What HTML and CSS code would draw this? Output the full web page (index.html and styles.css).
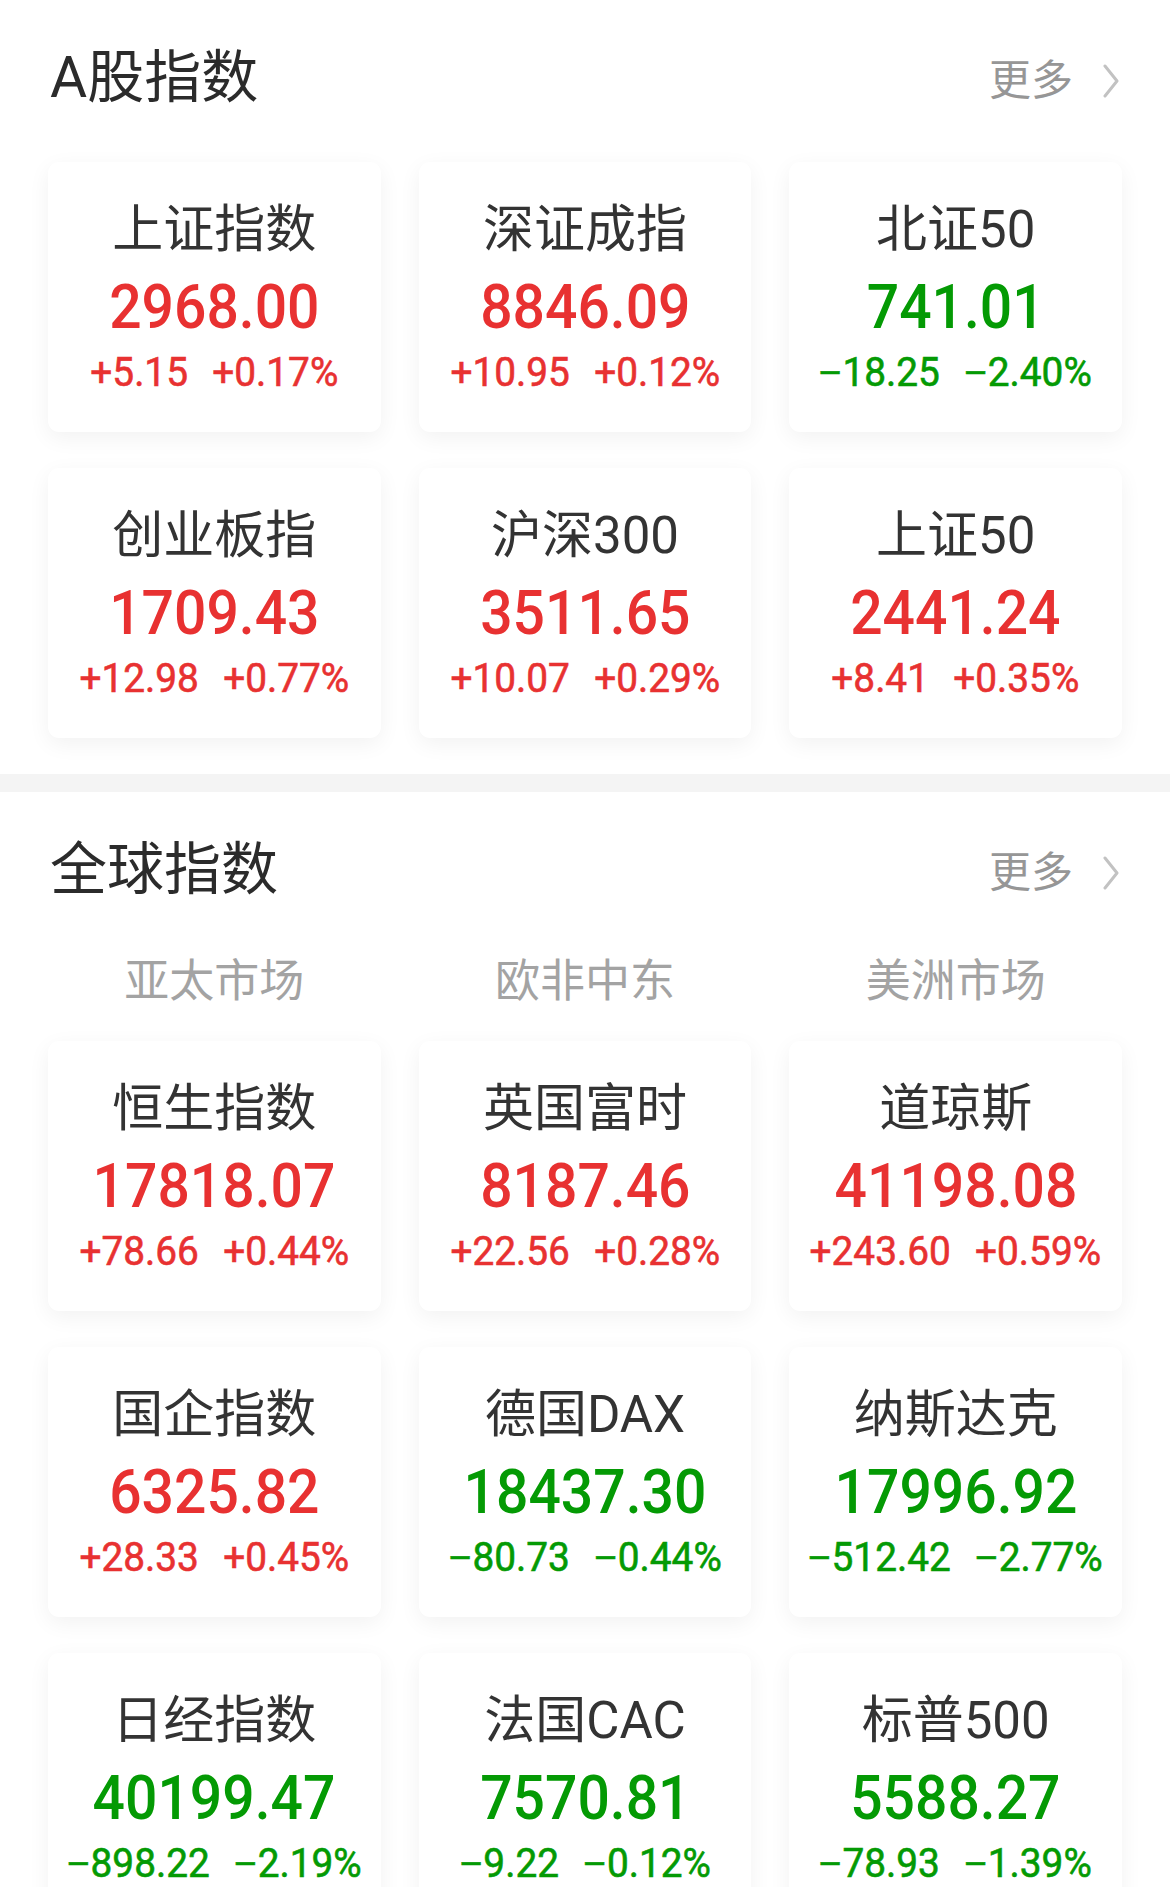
FILE: index.html
```html
<!DOCTYPE html>
<html lang="zh-CN">
<head>
<meta charset="utf-8">
<title>指数</title>
<link rel="stylesheet" href="styles.css">
</head>
<body>
<section class="block">
  <header class="block-head">
    <h2 class="block-title">A股指数</h2>
    <a class="more">更多<svg class="chev" viewBox="0 0 16 34" width="16" height="34"><polyline points="2,2 14,17 2,32" /></svg></a>
  </header>
  <div class="grid">
    <div class="card up"><div class="name">上证指数</div><div class="price"><span>2968.00</span></div><div class="chg"><span>+5.15</span><span>+0.17%</span></div></div>
    <div class="card up"><div class="name">深证成指</div><div class="price"><span>8846.09</span></div><div class="chg"><span>+10.95</span><span>+0.12%</span></div></div>
    <div class="card down"><div class="name">北证50</div><div class="price"><span>741.01</span></div><div class="chg"><span><i class="minus">−</i>18.25</span><span><i class="minus">−</i>2.40%</span></div></div>
    <div class="card up"><div class="name">创业板指</div><div class="price"><span>1709.43</span></div><div class="chg"><span>+12.98</span><span>+0.77%</span></div></div>
    <div class="card up"><div class="name">沪深300</div><div class="price"><span>3511.65</span></div><div class="chg"><span>+10.07</span><span>+0.29%</span></div></div>
    <div class="card up"><div class="name">上证50</div><div class="price"><span>2441.24</span></div><div class="chg"><span>+8.41</span><span>+0.35%</span></div></div>
  </div>
</section>
<div class="divider"></div>
<section class="block">
  <header class="block-head">
    <h2 class="block-title">全球指数</h2>
    <a class="more">更多<svg class="chev" viewBox="0 0 16 34" width="16" height="34"><polyline points="2,2 14,17 2,32" /></svg></a>
  </header>
  <nav class="tabs">
    <span>亚太市场</span>
    <span>欧非中东</span>
    <span>美洲市场</span>
  </nav>
  <div class="grid grid-tight">
    <div class="card up"><div class="name">恒生指数</div><div class="price"><span>17818.07</span></div><div class="chg"><span>+78.66</span><span>+0.44%</span></div></div>
    <div class="card up"><div class="name">英国富时</div><div class="price"><span>8187.46</span></div><div class="chg"><span>+22.56</span><span>+0.28%</span></div></div>
    <div class="card up"><div class="name">道琼斯</div><div class="price"><span>41198.08</span></div><div class="chg"><span>+243.60</span><span>+0.59%</span></div></div>
    <div class="card up"><div class="name">国企指数</div><div class="price"><span>6325.82</span></div><div class="chg"><span>+28.33</span><span>+0.45%</span></div></div>
    <div class="card down"><div class="name">德国DAX</div><div class="price"><span>18437.30</span></div><div class="chg"><span><i class="minus">−</i>80.73</span><span><i class="minus">−</i>0.44%</span></div></div>
    <div class="card down"><div class="name">纳斯达克</div><div class="price"><span>17996.92</span></div><div class="chg"><span><i class="minus">−</i>512.42</span><span><i class="minus">−</i>2.77%</span></div></div>
    <div class="card down"><div class="name">日经指数</div><div class="price"><span>40199.47</span></div><div class="chg"><span><i class="minus">−</i>898.22</span><span><i class="minus">−</i>2.19%</span></div></div>
    <div class="card down"><div class="name">法国CAC</div><div class="price"><span>7570.81</span></div><div class="chg"><span><i class="minus">−</i>9.22</span><span><i class="minus">−</i>0.12%</span></div></div>
    <div class="card down"><div class="name">标普500</div><div class="price"><span>5588.27</span></div><div class="chg"><span><i class="minus">−</i>78.93</span><span><i class="minus">−</i>1.39%</span></div></div>
  </div>
</section>
</body>
</html>
```

FILE: styles.css
```css
html, body {
  margin: 0;
  padding: 0;
  background: #ffffff;
}

body {
  font-family: Roboto, "Noto Sans CJK SC", sans-serif;
  color: #333333;
}

.block {
  padding-bottom: 36px;
}

/* section header: title on the left, "more" link on the right */
.block-head {
  display: flex;
  align-items: center;
  justify-content: space-between;
  height: 92px;
  padding: 32px 51px 0 50px;
}

.block-title {
  margin: 0;
  font-size: 57px;
  font-weight: 400;
  line-height: 92px;
  color: #2b2b2b;
}

.more {
  display: flex;
  align-items: center;
  gap: 30px;
  font-size: 42px;
  line-height: 50px;
  color: #969696;
  margin-top: 6px;
}

.chev {
  display: block;
}

.chev polyline {
  fill: none;
  stroke: #c2c2c2;
  stroke-width: 3;
  stroke-linecap: round;
  stroke-linejoin: round;
}

.divider {
  height: 18px;
  background: #f4f4f4;
}

/* market tabs above the global grid */
.tabs {
  display: grid;
  grid-template-columns: repeat(3, 1fr);
  column-gap: 38px;
  padding: 16px 48px 0;
  text-align: center;
  font-size: 45px;
  line-height: 100px;
  color: #a3a3a3;
}

.grid {
  display: grid;
  grid-template-columns: repeat(3, 1fr);
  gap: 36px 38px;
  padding: 0 48px;
  margin-top: 38px;
}

.grid-tight {
  margin-top: 9px;
}

.card {
  height: 270px;
  box-sizing: border-box;
  padding-top: 33px;
  background: #ffffff;
  border-radius: 11px;
  box-shadow: 0 6px 22px rgba(0, 0, 0, 0.055);
  text-align: center;
}

.name {
  font-size: 51px;
  line-height: 69px;
  color: #333333;
  white-space: nowrap;
}

.price {
  font-size: 62px;
  line-height: 86px;
  font-weight: 500;
  white-space: nowrap;
}

.price span {
  display: inline-block;
  transform: scaleX(0.92);
}

.chg {
  display: flex;
  justify-content: center;
  gap: 25px;
  font-size: 40px;
  line-height: 45px;
  font-weight: 400;
  white-space: nowrap;
  transform: scaleX(0.97);
}

.chg span {
  -webkit-text-stroke: 0.6px currentColor;
}

/* a minus sign as wide as the plus */
.minus {
  font-style: normal;
  font-family: "Liberation Sans", sans-serif;
  font-weight: 400;
  margin-right: 1px;
}

.up .price,
.up .chg {
  color: #e83131;
}

.down .price,
.down .chg {
  color: #049a04;
}
```
